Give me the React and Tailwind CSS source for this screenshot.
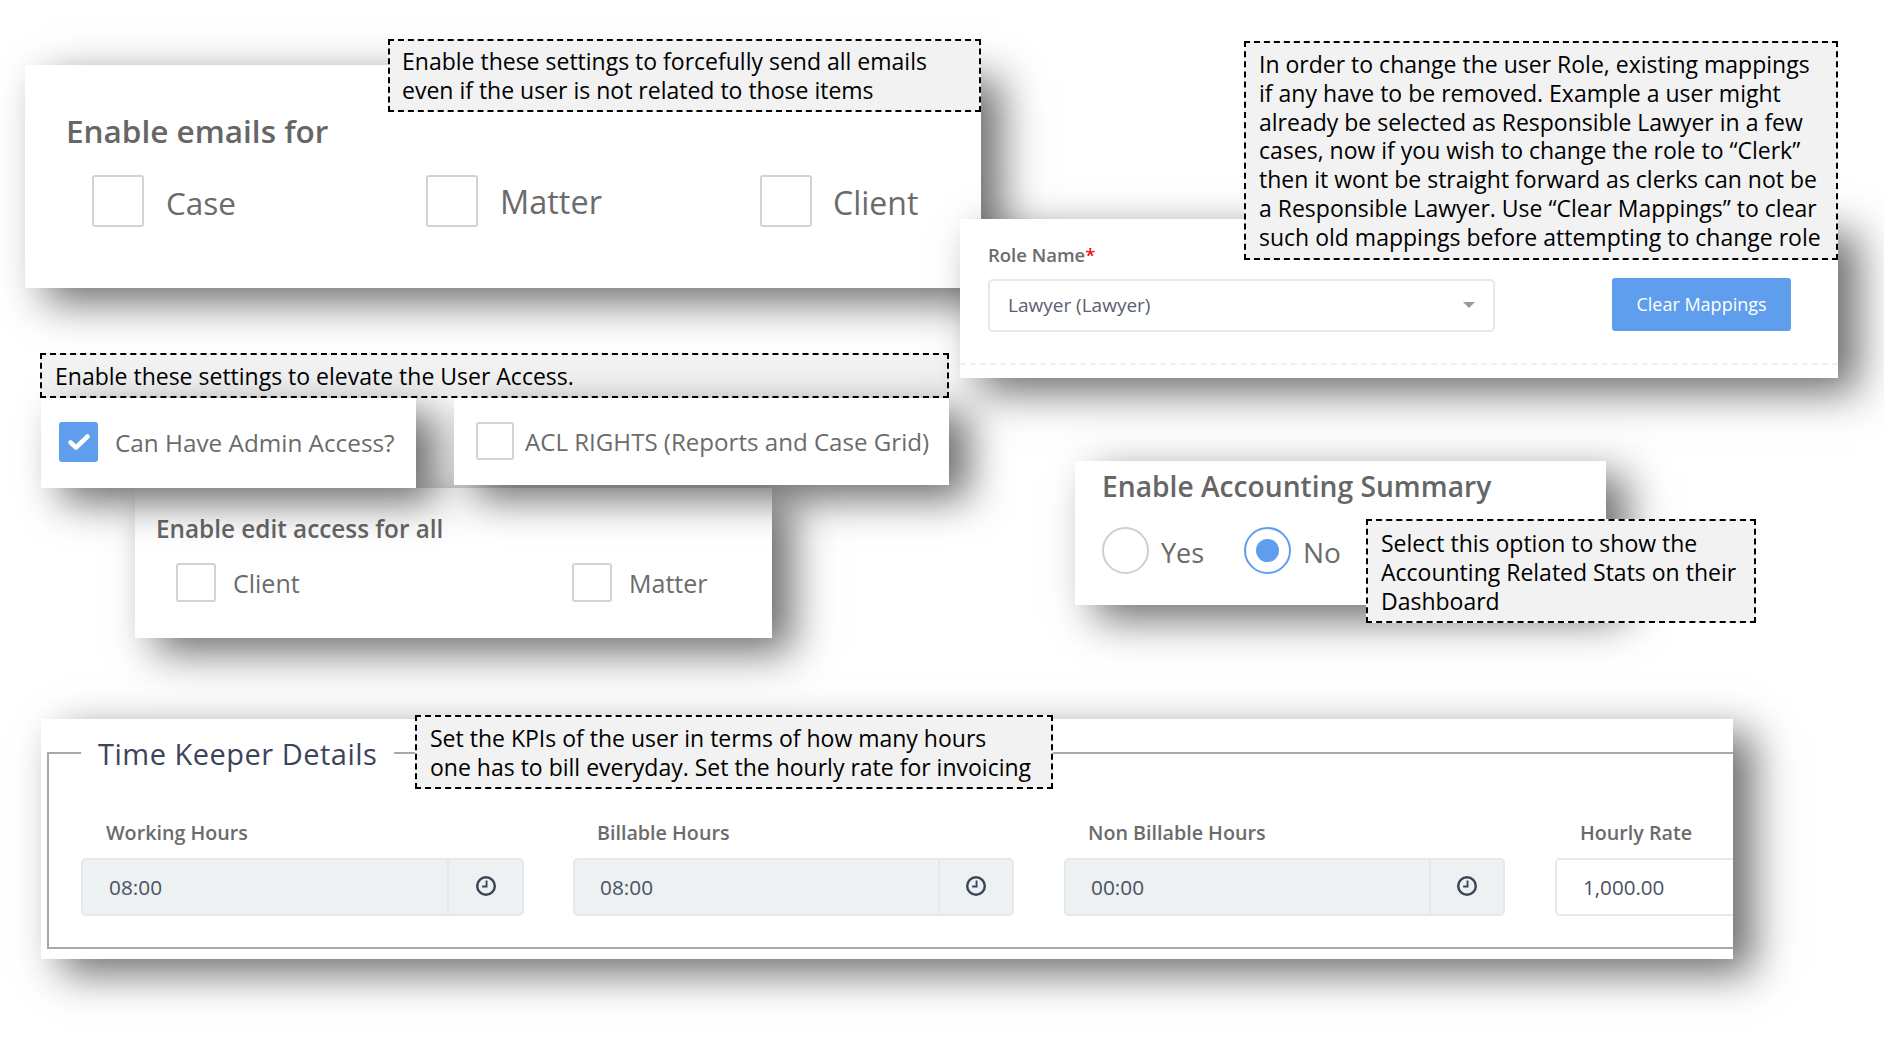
import React from "react";

const shadow = "shadow-[20px_14px_40px_rgba(0,0,0,0.58)]";

function Tip({ className, children }) {
  return (
    <div className={"absolute z-30 border-2 border-dashed border-black bg-[#f2f2f2] text-[23px] leading-[28.8px] text-black whitespace-pre " + className}>
      {children}
    </div>
  );
}

function Check({ className, label, labelClass, checked }) {
  return (
    <div className="flex items-center">
      <span className={"flex items-center justify-center rounded-[3px] " + (checked ? "bg-[#5f9ded] " : "border-2 border-[#d3d3d3] bg-white ") + className}>
        {checked && (
          <svg width="24" height="20" viewBox="0 0 24 20">
            <path d="M3.5 10.5 L9 15.5 L20.5 4.5" fill="none" stroke="#fff" strokeWidth="4.5" strokeLinecap="round" strokeLinejoin="round" />
          </svg>
        )}
      </span>
      <span className={"text-[#6b6b6b] " + labelClass}>{label}</span>
    </div>
  );
}

function ClockIcon() {
  return (
    <svg width="22" height="22" viewBox="0 0 20 20" fill="none" stroke="#3b4559" strokeWidth="2.2">
      <circle cx="10" cy="10" r="8" />
      <path d="M10.5 5 V10.5 H6.5" strokeWidth="1.7" />
    </svg>
  );
}

function TimeField({ className, label, labelClass, value, valueClass, dividerClass }) {
  return (
    <div className={"flex flex-col " + className}>
      <div className={"h-[30px] text-[19.7px] leading-[30px] font-semibold text-[#6b6b6b] " + labelClass}>{label}</div>
      <div className="mt-[10px] flex h-[58px] rounded-[5px] border-2 border-[#e3e8ec] bg-[#edf1f2]">
        <div className={"flex flex-1 items-center pt-[1px] text-[20.8px] text-[#4a5162] " + valueClass}>{value}</div>
        <div className={"flex items-center justify-center border-l-2 border-[#e3e8ec] pb-[3px] " + dividerClass}>
          <ClockIcon />
        </div>
      </div>
    </div>
  );
}

export default function App() {
  return (
    <div className="relative h-[1043px] w-[1884px] overflow-hidden bg-white font-['Open_Sans',sans-serif]">
      {/* Emails card */}
      <section className={"absolute left-[25px] top-[65px] z-0 h-[223px] w-[956px] bg-white pl-[41px] pt-[45px] " + shadow}>
        <h2 className="text-[31.5px] leading-[42px] font-semibold text-[#666666]">Enable emails for</h2>
        <div className="mt-[23px] flex pl-[26px]">
          <div className="w-[334px]"><Check className="h-[52px] w-[52px]" label="Case" labelClass="ml-[22px] pt-[3px] text-[31.5px]" /></div>
          <div className="w-[334px]"><Check className="h-[52px] w-[52px]" label="Matter" labelClass="ml-[22px] pt-[3px] text-[32.5px]" /></div>
          <div><Check className="h-[52px] w-[52px]" label="Client" labelClass="ml-[21px] pt-[3px] text-[32px]" /></div>
        </div>
      </section>
      <Tip className="left-[388px] top-[39px] h-[73px] w-[593px] pl-[12px] pt-[6px]">{"Enable these settings to forcefully send all emails\neven if the user is not related to those items"}</Tip>

      {/* Role card */}
      <section className={"absolute left-[960px] top-[219px] z-10 h-[159px] w-[878px] bg-white pl-[28px] " + shadow}>
        <div className="pt-[22px] text-[18.5px] leading-[28px] font-semibold text-[#6b6b6b]">
          Role Name<span className="text-[#f01010]">*</span>
        </div>
        <div className="mt-[10px] flex items-center">
          <div className="flex h-[53px] w-[507px] items-center justify-between rounded-[5px] border-2 border-[#e3e8ec] bg-white pl-[18px] pr-[18px] text-[19px] text-[#5a6070]">
            <span>Lawyer (Lawyer)</span>
            <span className="mb-[2px] h-0 w-0 border-x-[6px] border-t-[6px] border-x-transparent border-t-[#9a9a9a]" />
          </div>
          <button className="ml-[117px] mt-[-2px] h-[53px] w-[179px] rounded-[3px] bg-[#5f9ded] text-[18px] text-white">Clear Mappings</button>
        </div>
        <div className="absolute bottom-[13px] left-0 right-0 border-t-2 border-dashed border-[#efefef]" />
      </section>
      <Tip className="left-[1244px] top-[41px] h-[219px] w-[594px] pl-[13px] pt-[7px]">{"In order to change the user Role, existing mappings\nif any have to be removed. Example a user might\nalready be selected as Responsible Lawyer in a few\ncases, now if you wish to change the role to “Clerk”\nthen it wont be straight forward as clerks can not be\na Responsible Lawyer. Use “Clear Mappings” to clear\nsuch old mappings before attempting to change role"}</Tip>

      {/* Access tip: sits under the shadows of the cards below it */}
      <Tip className="left-[40px] top-[353px] !z-0 h-[45px] w-[909px] pl-[13px] pt-[7px]">Enable these settings to elevate the User Access.</Tip>

      {/* Edit access card */}
      <section className={"absolute left-[135px] top-[488px] z-0 h-[150px] w-[637px] bg-white pl-[21px] pt-[23px] " + shadow}>
        <h3 className="text-[24.3px] leading-[36px] font-semibold text-[#666666]">Enable edit access for all</h3>
        <div className="mt-[15px] flex pl-[20px]">
          <div className="w-[396px]"><Check className="h-[39px] w-[40px]" label="Client" labelClass="ml-[17px] pt-[3px] text-[25px]" /></div>
          <div><Check className="h-[39px] w-[40px]" label="Matter" labelClass="ml-[17px] pt-[3px] text-[25px]" /></div>
        </div>
      </section>

      {/* Admin access */}
      <section className={"absolute left-[41px] top-[398px] z-10 flex h-[90px] w-[375px] items-start bg-white pl-[18px] pt-[24px] " + shadow}>
        <Check checked className="h-[40px] w-[39px]" label="Can Have Admin Access?" labelClass="ml-[17px] pt-[3px] text-[24.3px]" />
      </section>
      <section className={"absolute left-[454px] top-[398px] z-10 flex h-[87px] w-[495px] items-start bg-white pl-[22px] pt-[24px] " + shadow}>
        <Check className="h-[38px] w-[38px]" label="ACL RIGHTS (Reports and Case Grid)" labelClass="ml-[11px] pt-[2px] text-[24.1px]" />
      </section>

      {/* Accounting */}
      <section className={"absolute left-[1075px] top-[461px] z-10 h-[144px] w-[531px] bg-white pl-[27px] pt-[6px] " + shadow}>
        <h3 className="text-[28.2px] leading-[38px] font-semibold text-[#666666]">Enable Accounting Summary</h3>
        <div className="mt-[22px] flex items-center">
          <span className="h-[47px] w-[47px] rounded-full border-2 border-[#cfcfcf] bg-white" />
          <span className="ml-[12px] w-[83px] pt-[6px] text-[27px] text-[#6b6b6b]">Yes</span>
          <span className="flex h-[47px] w-[47px] items-center justify-center rounded-full border-2 border-[#5f9ded] bg-white">
            <span className="h-[23px] w-[23px] rounded-full bg-[#5f9ded]" />
          </span>
          <span className="ml-[12px] pt-[2px] text-[28px] text-[#6b6b6b]">No</span>
        </div>
      </section>
      <Tip className="left-[1366px] top-[519px] h-[104px] w-[390px] pl-[13px] pt-[8px]">{"Select this option to show the\nAccounting Related Stats on their\nDashboard"}</Tip>

      {/* Time keeper */}
      <section className={"absolute left-[41px] top-[719px] z-10 h-[240px] w-[1692px] bg-white " + shadow}>
        <div className="absolute inset-0 overflow-hidden">
          <fieldset className="absolute left-[6px] top-[12px] h-[218px] w-[1760px] border-2 border-[#a8a8a8] pl-[32px]">
            <legend className="px-[17px] pt-[2px] text-[29px] leading-[42px] tracking-[0.5px] text-[#3b4559]">Time Keeper Details</legend>
          </fieldset>
          <div className="absolute left-[40px] top-[99px] flex">
            <TimeField className="w-[443px]" label="Working Hours" labelClass="pl-[25px]" value="08:00" valueClass="pl-[26px]" dividerClass="w-[75px]" />
            <TimeField className="ml-[49px] w-[441px]" label="Billable Hours" labelClass="pl-[24px]" value="08:00" valueClass="pl-[25px]" dividerClass="w-[74px]" />
            <TimeField className="ml-[50px] w-[441px]" label="Non Billable Hours" labelClass="pl-[24px]" value="00:00" valueClass="pl-[25px]" dividerClass="w-[74px]" />
            <div className="ml-[50px] flex w-[220px] flex-col">
              <div className="h-[30px] pl-[25px] text-[19.7px] leading-[30px] font-semibold text-[#6b6b6b]">Hourly Rate</div>
              <div className="mt-[10px] flex h-[58px] items-center rounded-[5px] border-2 border-[#e3e8ec] bg-white pl-[26px] pt-[1px] text-[20.6px] text-[#4a5162]">1,000.00</div>
            </div>
          </div>
        </div>
      </section>
      <Tip className="left-[415px] top-[715px] h-[74px] w-[638px] pl-[13px] pt-[7px]">{"Set the KPIs of the user in terms of how many hours\none has to bill everyday. Set the hourly rate for invoicing"}</Tip>
    </div>
  );
}
